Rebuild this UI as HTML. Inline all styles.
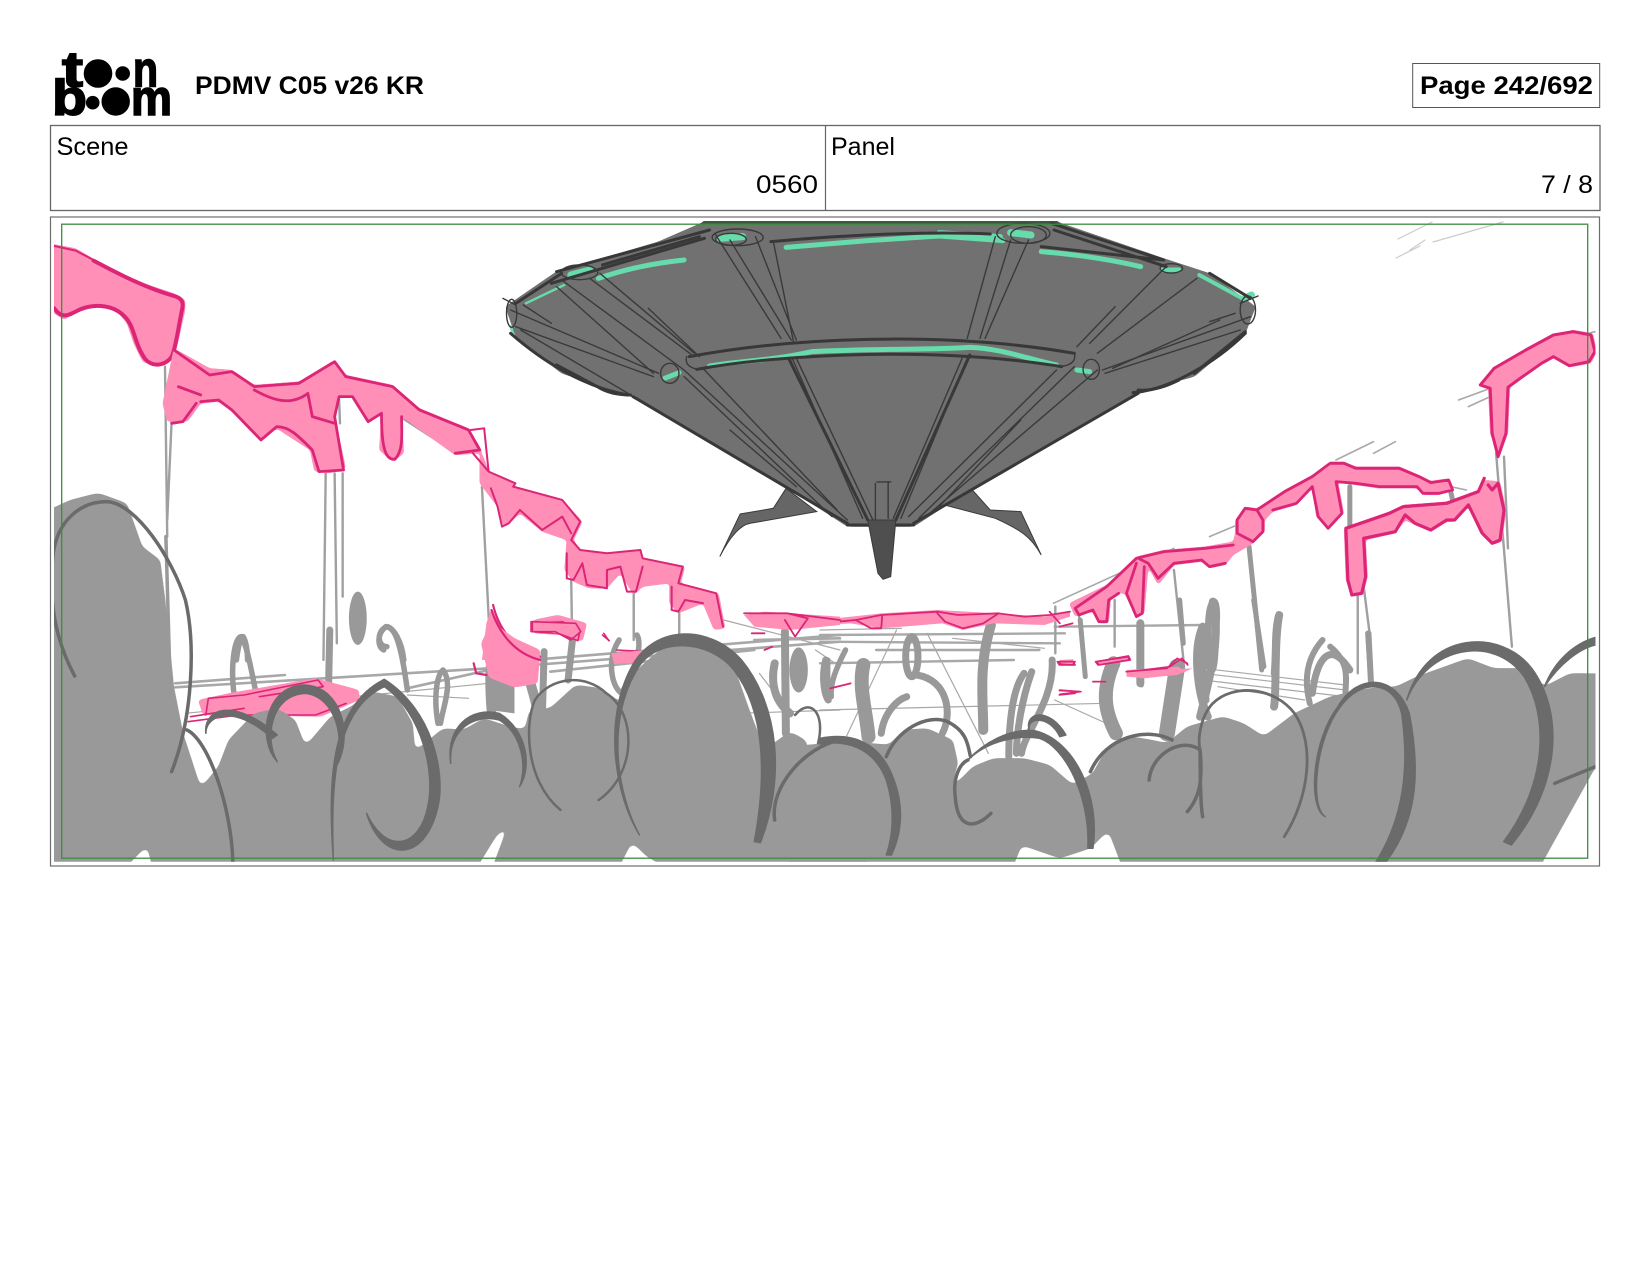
<!DOCTYPE html>
<html lang="en"><head><meta charset="utf-8"><title>PDMV C05 v26 KR</title>
<style>
html,body{margin:0;padding:0;background:#fff}
svg{display:block}
path,line,ellipse,polyline{vector-effect:non-scaling-stroke}
text{font-family:"Liberation Sans",sans-serif;fill:#000}
.t{fill:none;stroke:#a8a8a8;stroke-width:1.2;stroke-linecap:round}
.v{fill:none;stroke:#a0a0a0;stroke-width:2.4;stroke-linecap:round}
.l{fill:none;stroke:#999;stroke-width:5.5;stroke-linecap:round;stroke-linejoin:round}
.p{fill:#ff8fb6;stroke:none}
.s{fill:none;stroke:#dc2576;stroke-width:2.2;stroke-linejoin:round;stroke-linecap:round}
.S{fill:none;stroke:#dc2576;stroke-width:4;stroke-linejoin:round;stroke-linecap:round}
.c{fill:#999;stroke:none}
.d{fill:none;stroke:#6b6b6b;stroke-width:3.5;stroke-linecap:round}
.f{fill:#6b6b6b;stroke:#6b6b6b;stroke-width:1.5;stroke-linejoin:round}
.u{fill:none;stroke:#3a3a3a;stroke-width:1.4;stroke-linecap:round}
.U{fill:none;stroke:#383838;stroke-width:3;stroke-linecap:round}
.g{fill:none;stroke:#67dbab;stroke-width:5;stroke-linecap:round}
.lg{stroke:#000;stroke-width:1.6}
</style></head><body>
<svg xmlns="http://www.w3.org/2000/svg" width="1650" height="1275" viewBox="0 0 1650 1275">
<rect width="1650" height="1275" fill="#fff"/>
<defs>
<clipPath id="clip"><rect x="54" y="221" width="1541.5" height="640.7"/></clipPath>
<filter id="goo" x="-5%" y="-5%" width="110%" height="110%" color-interpolation-filters="sRGB"><feGaussianBlur stdDeviation="8"/><feColorMatrix values="1 0 0 0 0 0 1 0 0 0 0 0 1 0 0 0 0 0 14 -6"/></filter>
<filter id="goos" x="-10%" y="-10%" width="120%" height="120%" color-interpolation-filters="sRGB"><feGaussianBlur stdDeviation="5"/><feColorMatrix values="1 0 0 0 0 0 1 0 0 0 0 0 1 0 0 0 0 0 12 -5"/></filter>
</defs>

<!-- logo -->
<g>
<text class="lg" x="62" y="86.7" font-size="50" font-weight="700" textLength="21" lengthAdjust="spacingAndGlyphs">t</text>
<text class="lg" x="133" y="86.7" font-size="50" font-weight="700" textLength="25" lengthAdjust="spacingAndGlyphs">n</text>
<text class="lg" x="52" y="115" font-size="50" font-weight="700" textLength="35" lengthAdjust="spacingAndGlyphs">b</text>
<text class="lg" x="131" y="115" font-size="50" font-weight="700" textLength="41" lengthAdjust="spacingAndGlyphs">m</text>
<circle cx="98" cy="73.5" r="14.3" fill="#000"/><circle cx="122.7" cy="73.5" r="7.3" fill="#000"/>
<circle cx="92.7" cy="102.7" r="6.8" fill="#000"/><circle cx="115.7" cy="101.5" r="14.2" fill="#000"/>
</g>
<text x="195" y="94" font-size="25" font-weight="700" textLength="229" lengthAdjust="spacingAndGlyphs">PDMV C05 v26 KR</text>
<rect x="1412.7" y="63.5" width="187" height="44" fill="none" stroke="#555" stroke-width="1"/>
<text x="1420" y="94" font-size="25" font-weight="700" textLength="173" lengthAdjust="spacingAndGlyphs">Page 242/692</text>

<!-- header table -->
<rect x="50.5" y="125.5" width="1549.5" height="85" fill="none" stroke="#666" stroke-width="1.3"/>
<line x1="825.5" y1="125.5" x2="825.5" y2="210.5" stroke="#666" stroke-width="1.2"/>
<text x="56.5" y="155" font-size="25" textLength="72" lengthAdjust="spacingAndGlyphs">Scene</text>
<text x="756" y="193" font-size="25" textLength="62" lengthAdjust="spacingAndGlyphs">0560</text>
<text x="831" y="155" font-size="25" textLength="64" lengthAdjust="spacingAndGlyphs">Panel</text>
<text x="1541" y="193" font-size="25" textLength="52" lengthAdjust="spacingAndGlyphs">7 / 8</text>

<!-- image frame -->
<rect x="50.5" y="217" width="1549" height="649" fill="none" stroke="#6d6d6d" stroke-width="1.2"/>

<g clip-path="url(#clip)">

<!-- top-right sketch -->
<g class="t" stroke-opacity=".6">
<line x1="1398" y1="239" x2="1432" y2="222"/><line x1="1410" y1="250" x2="1425" y2="240"/><line x1="1433" y1="242" x2="1503" y2="222"/>
<line x1="1396" y1="258" x2="1420" y2="246"/>
</g>

<!-- perspective lines (z6) -->
<g transform="translate(40,600) scale(.5102,.3333)">
<path class="t" style="stroke-width:2.6" d="M265,262L880,205M265,250L480,225M720,265L880,210M880,190L1568,105M880,205L1568,125M1000,215L1400,150M1400,120L1568,115"/>
<path class="t" d="M285,340L880,250M720,285L840,295M1370,340L1568,330M1340,60L1568,150M1410,220L1470,340M1520,150L1568,200"/>
</g>
<g transform="translate(820,600) scale(.5102,.3333)">
<path class="t" style="stroke-width:2.4" d="M0,105L480,100M0,125L470,130M110,150L430,150M0,190L380,180M460,80L750,75"/>
<path class="t" d="M0,330L560,310M750,220L1030,270M750,240L1030,290M750,205L1030,255M780,260L950,300M460,300L590,390M210,100L330,460M150,90L30,480M0,90L160,85M260,115L440,145"/>
</g>

<!-- poles z4 -->
<g transform="translate(40,220) scale(.4464,.3333)">
<path class="v" d="M280,440L285,950M295,600L285,900M640,760L635,1320M660,760L665,1270M678,760L678,1130M652,540L650,610M670,540L672,610M990,800L1007,1240M1190,1080L1192,1260M1330,1120L1330,1260M1432,1170L1432,1245"/>
<path class="l" style="stroke-width:3.5" d="M282,950L290,1320M815,595L930,695"/>
<ellipse cx="712" cy="1195" rx="20" ry="80" fill="#999"/>
<path class="l" d="M815,1320C810,1260 790,1220 775,1220C755,1240 755,1280 770,1290M440,1320C445,1270 450,1250 455,1250C465,1270 465,1320 465,1320"/>
</g>

<!-- poles z5 -->
<g transform="translate(1000,300) scale(.3953,.3333)">
<path class="v" d="M1255,460L1295,1040M1275,470L1285,745M905,880L905,1120M920,860L935,1000M440,810L465,1090M290,900L290,1040M200,950L215,1130M140,920L140,1060"/>
<path class="t" style="stroke-width:1.6" d="M1160,300L1240,265M1185,320L1240,290M850,480L945,425M945,460L1000,425M530,710L600,675M135,910L440,745M1505,95L1470,105M1100,550L1180,570"/>
<path class="l" style="stroke-width:5" d="M885,560L885,680M630,740L662,1110M930,1000L938,1140M1135,550L1145,600"/>
<path class="l" style="stroke-width:8" d="M355,970L355,1150M705,950C695,1000 700,1060 695,1120M525,990C505,1010 510,1100 520,1200"/>
<path class="l" style="stroke-width:7" d="M540,905C525,920 525,1000 530,1100C545,1150 545,1000 548,950C548,920 545,905 540,905M790,1180C800,1090 830,1010 885,1110"/>
</g>

<!-- light figures z6 -->
<g transform="translate(40,600) scale(.5102,.3333)">
<path class="l" d="M385,320C370,220 380,110 395,110C410,150 420,270 430,320"/>
<path class="l" style="stroke-width:7" d="M568,90L565,300M988,155L985,330M1045,100L1035,240"/>
<path class="l" d="M720,270C710,160 700,85 680,80C660,90 660,140 680,140M780,370C770,280 780,220 790,210C810,250 790,320 785,370"/>
<path class="l" style="stroke-width:10" d="M885,330C880,220 880,130 910,130C950,140 970,300 980,360"/>
<path d="M880,330L880,200L930,130L930,340Z" fill="#999"/>
<path class="l" d="M1135,120C1110,180 1120,260 1140,280C1170,200 1180,130 1170,105"/>
<path class="l" style="stroke-width:8" d="M1460,95L1462,400M1440,190C1430,260 1445,310 1470,340"/>
<ellipse cx="1487" cy="210" rx="18" ry="68" fill="#999"/>
<path class="l" style="stroke-width:7" d="M1540,180C1530,240 1540,290 1545,300"/>
</g>

<!-- light figures z7 -->
<g transform="translate(820,600) scale(.5102,.3333)">
<path class="l" style="stroke-width:10" d="M335,75C310,200 320,300 320,390"/>
<ellipse cx="180" cy="170" rx="12" ry="60" fill="none" stroke="#999" stroke-width="7"/>
<path class="l" d="M15,180L15,290M50,150C30,210 20,250 22,290"/>
<path class="l" style="stroke-width:14" d="M85,195C75,260 90,330 95,410"/>
<path class="l" style="stroke-width:7" d="M120,400C125,340 150,300 170,290M190,225C250,240 260,340 240,400"/>
<path class="l" style="stroke-width:7" d="M400,220C370,280 370,440 370,470M455,180C460,300 400,400 395,460M415,215C395,300 385,400 385,460"/>
<path class="l" style="stroke-width:14" d="M575,190C550,280 560,340 580,400"/>
<path class="l" style="stroke-width:5" d="M628,70L630,255M705,0L712,130M850,0L870,200M510,60L520,230"/>
<path class="l" style="stroke-width:16" d="M700,200L680,400"/>
<path class="l" style="stroke-width:8" d="M770,5C785,100 770,200 745,350M750,80C730,150 740,280 760,350"/>
<path class="l" style="stroke-width:8" d="M900,45C890,120 895,280 890,320"/>
<path class="l" style="stroke-width:6" d="M985,120C950,180 950,250 960,310M1000,140C1040,190 1030,240 1030,280M1075,100L1080,250"/>
</g>

<!-- pink left z4 -->
<g transform="translate(40,220) scale(.4464,.3333)">
<path class="p" filter="url(#goos)" d="M20,70L80,85L130,125L220,185L300,220L325,240L325,270L310,360L300,410L265,442L230,425L210,370L195,310L165,262L125,252L85,268L55,300L20,270Z"/>
<path class="s" style="stroke-width:2" d="M32,78L80,92L120,120"/>
<path class="S" d="M120,122C180,165 240,205 300,228C320,235 322,250 318,270C310,320 305,380 295,410C280,440 245,445 230,405C212,370 212,320 190,290C165,255 125,250 90,268C65,285 50,300 32,265"/>
<path class="p" filter="url(#goos)" d="M300,385L380,445L430,450L480,495L580,485L660,420L685,465L790,495L850,565L960,625L985,680L1005,755L1065,790L1060,800L1170,840L1215,905L1195,960L1210,990L1270,1000L1345,990L1350,1015L1445,1040L1435,1090L1520,1120L1535,1225L1510,1230L1485,1150L1430,1180L1410,1150L1410,1090L1350,1100L1330,1125L1300,1060L1270,1105L1230,1105L1195,1085L1175,1050L1180,960L1125,935L1075,880L1040,925L1025,860L985,790L985,700L930,705L810,590L815,700L790,725L760,690L765,580L735,610L700,530L670,530L660,590L685,745L650,760L615,755L605,690L530,625L495,665L430,575L400,545L360,550L330,605L285,605L275,550Z"/>
<path class="s" style="stroke-width:2.8" d="M300,390L380,465L430,455L480,500L580,490L660,425L685,470L790,500L850,570L960,630L985,690L930,700M810,590C810,640 815,690 795,718C775,720 765,690 765,580L735,605L700,530L670,530L660,590L680,750L625,755L610,690C580,650 560,620 530,620L495,660L430,570L400,540L360,545M480,510C520,540 560,560 600,520L610,590L660,610M310,500L360,525M350,550L320,605L295,610"/>
<path class="s" style="stroke-width:2" d="M965,630L995,625L1005,755L970,700M1005,755L1065,790L1060,800L1170,840L1210,905L1190,960M1010,805L1025,860L1035,920L1050,910L1075,870L1125,930L1170,890L1190,940M1190,960L1210,990L1270,1000L1345,990L1350,1015L1440,1040L1430,1090L1515,1120L1530,1220M1180,1000L1180,1075L1195,1080L1215,1030L1225,1095L1270,1105L1270,1050L1300,1040L1315,1115L1335,1115L1350,1040M1415,1100L1415,1170L1430,1175L1445,1140L1485,1150"/>
<path class="p" d="M1000,1210L1010,1170L1060,1270L1120,1295L1120,1320L990,1320Z"/>
<path class="s" d="M1015,1155C1030,1240 1070,1290 1120,1310"/>
<path class="p" filter="url(#goos)" d="M1105,1200L1160,1185L1225,1210L1215,1265L1170,1245L1105,1240Z"/>
<path class="s" style="stroke-width:1.6" d="M1100,1205L1170,1205L1210,1230L1205,1262L1160,1240L1100,1235ZM1260,1245L1275,1262"/>
</g>

<!-- pink right z5 -->
<g transform="translate(1000,300) scale(.3953,.3333)">
<path class="p" filter="url(#goos)" d="M1210,255L1250,205L1330,150L1400,105L1450,90L1500,100L1510,155L1495,190L1440,202L1400,172L1370,192L1310,245L1290,262L1285,400L1262,475L1240,400L1235,265Z"/>
<path class="S" style="stroke-width:3" d="M1240,265L1215,255L1250,205L1330,150L1400,105L1450,95L1495,105L1505,155L1490,185L1440,197L1400,170L1370,190L1310,240L1285,262L1280,400L1260,470L1245,400L1240,265"/>
<path class="p" filter="url(#goos)" d="M595,660L620,620L650,625L720,570L790,525L835,485L870,485L900,500L1010,500L1060,525L1090,543L1135,535L1150,570L1110,585L1070,585L1055,565L960,565L900,555L855,545L870,640L830,690L800,650L790,560L750,615L690,635L670,660L670,695L640,730L590,765L570,795L530,805L510,785L440,795L400,855L375,800L365,940L345,955L315,880L290,880L280,900L275,970L250,970L235,935L190,950L175,910L270,855L345,770L415,750L520,740L590,725L595,700Z"/>
<path class="s" style="stroke-width:2.8" d="M650,630L720,575L790,530L835,490L870,490L900,505L1010,505L1060,530L1090,548L1135,540L1145,570L1110,580L1070,580L1055,560L960,560L900,550L850,545L865,640L830,685L805,650L790,560L750,610L690,630M600,660L620,625L650,630L665,660L665,695L640,725L600,700ZM590,735L520,745L415,755L345,775L270,860L190,925L200,945L235,930L250,965L270,965L275,900L300,880M350,775L375,790L400,835L440,790L510,780L530,800L570,790M345,790L320,880L345,950L360,940L365,800"/>
<path class="p" filter="url(#goos)" d="M870,685L985,635L1020,615L1130,605L1210,570L1225,540L1265,545L1280,630L1270,725L1245,735L1215,700L1185,620L1150,665L1130,665L1090,695L1050,675L1025,660L1000,700L925,720L930,830L918,885L890,890L875,840Z"/>
<path class="S" style="stroke-width:3.2" d="M875,685L985,640L1020,620L1130,610L1210,575L1225,535M1235,555L1245,570L1260,550L1275,630L1265,720L1245,730L1220,700L1185,615L1150,660L1130,660L1090,690L1050,670L1025,645L1000,695L920,715L925,830L915,880L890,885L880,840L875,685"/>
<path class="p" d="M150,1080L185,1078L190,1095L155,1095Z M245,1085L325,1070L330,1080L250,1095Z M320,1110L450,1100L470,1115L370,1135L320,1130Z"/>
<path class="s" style="stroke-width:1.6" d="M145,1085L185,1085L190,1095L150,1095ZM245,1085L325,1068L330,1080L250,1095ZM330,1115L430,1100L460,1075L475,1095M370,1130L460,1115M235,1145L260,1145M150,1172L205,1175M150,1185L190,1180"/>
</g>

<!-- pink centre -->
<g transform="translate(820,600) scale(.5102,.3333)">
<path class="p" d="M0,60L120,40L230,30L350,40L440,50L490,35L490,50L440,75L340,70L280,90L240,70L120,85L60,70L0,75Z"/>
<path class="s" style="stroke-width:1.8" d="M0,70L70,60L120,45L230,35L270,45L350,40L320,70L280,85L245,65L230,40M70,60L100,85L120,85L122,45M350,40L400,50L450,45L490,35M450,35L470,70M470,80L495,70M20,265L60,250"/>
<path class="p" d="M600,215L730,205L700,225L630,235Z"/>
<path class="s" style="stroke-width:1.6" d="M470,185L500,185L495,195L470,192ZM540,185L605,170L605,180L545,195ZM535,245L560,245M600,215L680,205L700,175L720,190M470,270L510,275L470,283"/>
<path d="M1085,265L1105,270L1110,290L1095,285Z" fill="#ff6fa4"/>
</g>
<g transform="translate(40,600) scale(.5102,.3333)">
<path class="p" d="M1380,45L1420,35L1568,50L1568,75L1470,90L1400,80Z"/>
<path class="s" style="stroke-width:1.8" d="M1380,40L1465,40L1505,55L1480,110L1460,60M1465,40L1568,60M1395,100L1420,100M1420,150L1435,140"/>
<path class="p" filter="url(#goos)" d="M865,130L885,65L930,115L980,150L975,250L930,262L880,232Z"/>
<path class="s" d="M885,30C900,100 930,160 980,180M850,190L855,220L875,225"/>
<path class="p" d="M975,60L1060,70L1060,95L1010,100L975,90Z"/>
<path class="s" style="stroke-width:1.6" d="M965,65L1050,70L1060,95L1040,120L1010,95L965,95ZM1105,100L1115,122M1130,150L1190,155"/>
<path class="p" d="M1120,160L1190,150L1170,190L1125,190ZM1275,125L1320,130L1300,145Z"/>
<path class="p" filter="url(#goos)" d="M310,300L370,280L540,235L625,270L625,300L550,350L400,345L320,345Z"/>
<path class="s" style="stroke-width:1.6" d="M325,345L330,295L400,285L545,240L555,260L430,290M290,365L390,345L540,345L600,310M295,350L400,325"/>
</g>

<!-- UFO z3 -->
<g transform="translate(480,210) scale(.5102,.3333)">
<path d="M600,835L575,895L510,912L470,1040C490,980 510,945 530,940L660,905Z" fill="#666" stroke="#3a3a3a" stroke-width="1"/>
<path d="M965,840L1000,900L1060,905L1100,1035C1080,980 1060,960 1010,925L910,885Z" fill="#666" stroke="#3a3a3a" stroke-width="1"/>
<path filter="url(#goos)" d="M440,0L440,35L350,95L150,185L50,290L70,380L160,490L290,555L420,670L600,830L720,950L850,950L960,840L1100,720L1290,545L1400,500L1500,370L1520,290L1430,190L1340,145L1130,35L1130,0Z" fill="#717171"/>
<path d="M440,33L1130,33L1140,42L430,42Z" fill="#3e5a3e"/>
<g class="g">
<path d="M600,112L760,92L900,78L1025,92"/>
<path d="M900,68L1020,80"/>
<path d="M232,205C290,175 340,160 400,150"/>
<path d="M1100,125C1180,135 1240,150 1295,170"/>
<path d="M450,468C520,450 560,455 650,425C780,415 880,420 960,412C1020,415 1070,445 1130,465"/>
<path style="stroke-width:2.4" d="M90,280L165,225M60,350L65,370"/>
<path style="stroke-width:4" d="M1410,195L1500,270"/>
<path d="M1338,180L1370,180"/>
<path d="M362,505L390,488M1170,480L1195,485"/>
<path style="stroke-width:7" d="M470,85L515,80M1040,68L1080,75M1500,265L1512,255M178,195L215,180"/>
</g>
<g class="U">
<path d="M300,560L720,940M1290,550L850,940M60,370C120,450 200,530 290,555M1500,370C1440,460 1350,540 1280,548M150,185L450,60M1340,150L1120,40M605,445L760,930M960,435L815,930M70,280L160,190M1430,190L1510,265"/>
<path d="M570,95C750,70 900,65 1000,72M430,80L240,165M1100,110L1340,150"/>
<path d="M410,440C600,385 900,360 1165,430M425,478C600,430 900,410 1140,470M720,945L850,945"/>
<path d="M230,530C250,550 275,555 295,555M1290,540C1320,545 1350,525 1370,510M140,220L440,85M1125,60L1345,170M150,465L230,530M1400,490L1500,365"/>
</g>
<g class="u">
<path d="M460,70L590,385M490,90L610,390M540,80L620,390M575,95L615,400M1010,80L955,385M1040,90L980,385M1075,90L990,385"/>
<path d="M620,445L770,930M612,445L750,925M945,445L810,925M955,445L825,925M160,210L400,480L720,930M215,205L420,440M235,190L420,430M330,295L430,440M440,480L700,900M400,500L690,920M490,660L620,830"/>
<path d="M60,300L350,490M70,350L340,500M80,360L290,550M85,285L140,340M1345,170L1195,400M1405,205L1210,430M1245,290L1170,410M1165,470L860,925M1210,480L870,925M1130,480L840,920M1510,320L1220,480M1490,360L1225,490M1480,310L1430,335M1060,630L900,890"/>
<path d="M405,440C400,470 420,480 440,478M1165,430C1170,460 1150,470 1130,470M45,265L70,285M1525,258L1490,280M150,230L340,490M1450,330L1240,475"/>
</g>
<g fill="none" stroke="#3a3a3a" stroke-width="1.4">
<ellipse cx="505" cy="82" rx="50" ry="25"/><ellipse cx="492" cy="88" rx="30" ry="18"/>
<ellipse cx="1065" cy="70" rx="52" ry="30"/><ellipse cx="1075" cy="75" rx="35" ry="25"/>
<ellipse cx="195" cy="187" rx="36" ry="22"/>
<ellipse cx="62" cy="310" rx="10" ry="42"/><ellipse cx="1505" cy="300" rx="15" ry="42"/>
<ellipse cx="1355" cy="175" rx="22" ry="14"/>
<ellipse cx="372" cy="490" rx="18" ry="30"/><ellipse cx="1198" cy="478" rx="16" ry="30"/>
</g>
<path d="M760,930L815,930L805,1100L790,1108L780,1090Z" fill="#4f4f4f" stroke="#3a3a3a" stroke-width="1"/>
<path class="u" d="M775,820L775,930M800,815L800,925M778,816L805,816"/>
</g>

<!-- crowd -->
<g transform="translate(40,600) scale(.5102,.3333)">
<path class="c" filter="url(#goo)" d="M-40,830L-40,-230L60,-300L114,-321L170,-290L200,-160L235,-120L245,0L262,260L280,400L315,565L350,500L370,420L420,340L465,325L500,360L520,440L570,350L610,320L650,275L700,290L730,370L735,455L790,385L830,390L870,355L910,375L950,390L960,330L1000,325L1050,255L1100,265L1140,310L1170,210L1230,130L1300,125L1360,200L1390,330L1420,450L1470,395L1500,420L1510,470L1620,450L1620,830L1260,830L1190,770L1160,725L1125,830L880,830L920,670L895,705L845,830L225,830L210,735L150,830Z"/>
</g>
<g transform="translate(820,600) scale(.5102,.3333)">
<path class="c" filter="url(#goo)" d="M-60,440L50,425L100,430L135,435L165,390L210,385L260,420L270,490L255,570L300,500L340,475L400,475L450,495L495,555L535,520L560,450L610,410L650,420L680,430L720,380L790,350L830,370L870,410L930,340L1000,290L1075,265L1130,260L1170,230L1270,175L1320,205L1380,205L1420,260L1470,220L1600,222L1600,500L1520,500L1400,830L600,830L565,690L530,745L470,775L395,735L370,830L-60,830Z"/>
</g>

<!-- dark arcs -->
<g transform="translate(40,600) scale(.5102,.3333)">
<path class="d" d="M68,228C30,120 15,0 26,-140C35,-240 80,-295 131,-295C190,-290 260,-120 285,0C305,130 300,350 258,515"/>
<path class="d" d="M288,390C330,420 375,620 378,785"/>
<path class="f" d="M325,400C325,345 380,310 455,415L465,405C385,295 320,320 325,400Z"/>
<path class="f" d="M465,485C440,420 450,285 520,280C580,290 600,420 578,505C615,420 595,262 520,255C440,255 425,420 465,485Z"/>
<path class="f" d="M575,780C570,560 575,330 675,260C750,340 775,520 760,620C745,740 680,770 640,640C670,790 755,790 780,620C795,520 770,330 675,238C565,320 565,560 575,780Z"/>
<path class="f" d="M805,490C800,390 850,340 900,360C945,400 955,500 940,560C965,500 955,390 900,340C845,320 795,380 805,490Z"/>
<path class="d" style="stroke-width:2.5" d="M1020,630C950,540 950,370 970,300C1000,230 1070,220 1110,280C1170,340 1170,520 1095,600"/>
<path class="f" d="M1175,705C1130,580 1110,360 1170,210C1205,110 1310,115 1360,210C1420,330 1425,520 1400,725L1412,728C1460,540 1450,320 1375,180C1310,70 1200,75 1158,205C1105,360 1125,580 1175,705Z"/>
<path class="d" d="M1440,660C1430,560 1500,440 1568,420"/>
<path class="d" style="stroke-width:2.5" d="M1480,345C1510,290 1540,340 1525,430"/>
</g>
<g transform="translate(820,600) scale(.5102,.3333)">
<path class="f" d="M0,432C50,420 105,440 130,540C150,640 140,720 130,765L140,765C160,700 165,620 145,540C115,410 50,400 0,415Z"/>
<path class="d" d="M130,470C150,390 210,340 250,365C290,395 290,440 295,470"/>
<path class="d" d="M335,640C310,680 270,700 265,590C260,530 275,490 290,480"/>
<path class="f" d="M290,480C330,420 390,405 430,415C480,440 530,590 525,745L535,745C550,590 500,420 420,392C370,385 320,430 290,480Z"/>
<path class="f" d="M410,390C405,350 450,345 470,410L482,405C450,320 400,335 410,390Z"/>
<path class="d" d="M530,515C560,410 640,380 690,420"/>
<path class="d" d="M645,540C650,460 710,410 745,450C750,540 745,590 720,635M750,650C745,610 745,500 745,450"/>
<path class="d" style="stroke-width:2.8" d="M910,710C960,590 970,430 930,340C890,260 810,250 770,310C745,350 740,420 745,450"/>
<path class="f" d="M990,650C960,620 970,420 1020,320C1060,235 1125,240 1140,340C1155,500 1145,650 1090,785L1110,785C1175,650 1175,500 1155,340C1130,225 1055,215 1015,320C965,420 955,620 990,650Z"/>
<path class="f" d="M1150,300C1190,140 1320,100 1380,230C1425,340 1430,540 1340,725L1355,735C1450,560 1460,340 1395,205C1335,85 1190,90 1150,300Z"/>
<path class="f" d="M1420,260C1450,190 1490,145 1520,135L1520,112C1480,130 1440,180 1420,260Z"/>
<path class="d" d="M1440,550L1520,500"/>
</g>
</g>

<!-- safe-area frame -->
<rect x="61.7" y="224.2" width="1526" height="634" fill="none" stroke="#3f8a3f" stroke-width="1.3"/>
</svg>
</body></html>
